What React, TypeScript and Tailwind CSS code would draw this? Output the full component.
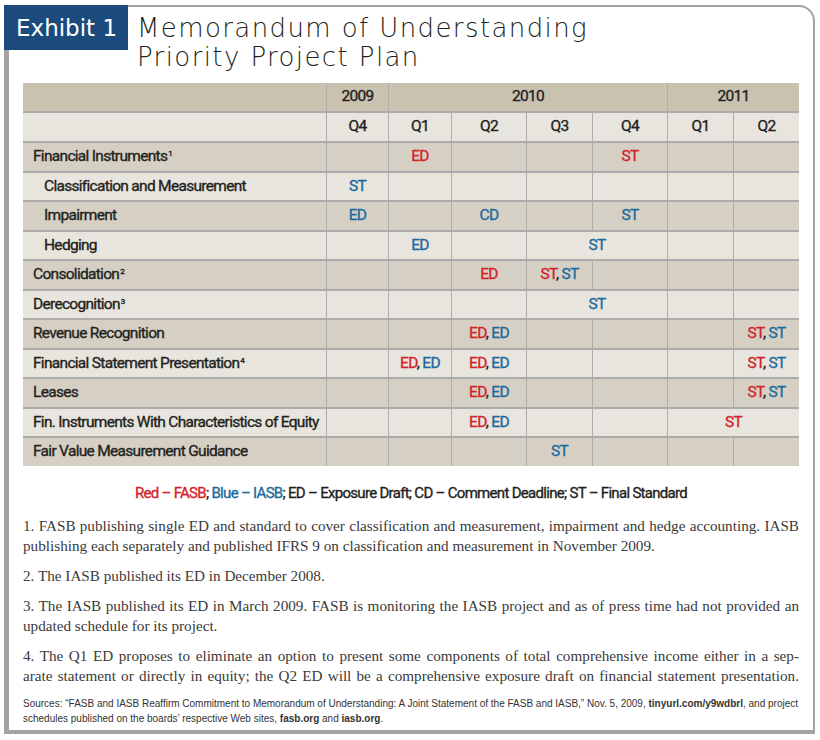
import React from 'react';

type Tone = 'r' | 'b';
type Mark = [string, Tone];

interface Cell {
  span?: number;
  marks?: Mark[];
}

interface Row {
  label: string;
  sup?: string;
  indent?: boolean;
  cells: Cell[];
}

const e: Cell = {};
const red = (t: string): Cell => ({ marks: [[t, 'r']] });
const blue = (t: string): Cell => ({ marks: [[t, 'b']] });
const both = (t: string): Cell => ({ marks: [[t, 'r'], [t, 'b']] });

const rows: Row[] = [
  { label: 'Financial Instruments', sup: '1', cells: [e, red('ED'), e, e, red('ST'), e, e] },
  { label: 'Classification and Measurement', indent: true, cells: [blue('ST'), e, e, e, e, e, e] },
  { label: 'Impairment', indent: true, cells: [blue('ED'), e, blue('CD'), e, blue('ST'), e, e] },
  { label: 'Hedging', indent: true, cells: [e, blue('ED'), e, { ...blue('ST'), span: 2 }, e, e] },
  { label: 'Consolidation', sup: '2', cells: [e, e, red('ED'), both('ST'), e, e, e] },
  { label: 'Derecognition', sup: '3', cells: [e, e, e, { ...blue('ST'), span: 2 }, e, e] },
  { label: 'Revenue Recognition', cells: [e, e, both('ED'), e, e, e, both('ST')] },
  { label: 'Financial Statement Presentation', sup: '4', cells: [e, both('ED'), both('ED'), e, e, e, both('ST')] },
  { label: 'Leases', cells: [e, e, both('ED'), e, e, e, both('ST')] },
  { label: 'Fin. Instruments With Characteristics of Equity', cells: [e, e, both('ED'), e, e, { ...red('ST'), span: 2 }] },
  { label: 'Fair Value Measurement Guidance', cells: [e, e, e, blue('ST'), e, e, e] },
];

const quarters = ['Q4', 'Q1', 'Q2', 'Q3', 'Q4', 'Q1', 'Q2'];

const Marks = ({ marks }: { marks?: Mark[] }) => {
  if (!marks) return null;
  return (
    <span className="whitespace-pre">
      {marks.map(([t, tone], i) => (
        <React.Fragment key={i}>
          {i > 0 && <span className="text-[#231f20]">, </span>}
          <span className={tone === 'r' ? 'text-[#d2232a]' : 'text-[#1b6a9c]'}>{t}</span>
        </React.Fragment>
      ))}
    </span>
  );
};

const App: React.FC = () => {
  return (
    <div className="w-[820px] h-[740px] bg-white pt-[5px] pl-[4px]">
      <div className="w-[811px] h-[729px] border-t-2 border-r-2 border-b-4 border-l-[5px] border-[#a3a3a3] rounded-tr-[16px] flex flex-col">
        {/* heading */}
        <div className="flex items-start">
          <div className="-mt-[2px] -ml-[5px] w-[124px] h-[45px] bg-[#1b4b7c] text-white pl-[12px] pt-[2px] text-[23px] leading-[43px] font-['DejaVu_Sans',sans-serif]">
            Exhibit 1
          </div>
          <h1 className="ml-[9px] mt-[7px] text-[26px] leading-[29px] tracking-[1.4px] font-extralight text-[#231f20] font-['DejaVu_Sans',sans-serif]">
            Memorandum of Understanding
            <br />
            Priority Project Plan
          </h1>
        </div>

        {/* schedule table */}
        <div className="mt-[11px] ml-[14px] w-[776px] grid grid-cols-[303px_61px_62px_74px_65px_74px_65px_65px] grid-rows-[28px_28px] auto-rows-[27.5px] gap-x-px gap-y-[2px] bg-[#acacac] text-[15.5px] tracking-[-0.7px] [-webkit-text-stroke:0.35px_currentColor] font-['Roboto',sans-serif] text-[#231f20]">
          <div className="bg-[#cac2b1]" />
          <div className="bg-[#cac2b1] flex items-center justify-center">2009</div>
          <div className="bg-[#cac2b1] col-span-4 flex items-center justify-center">2010</div>
          <div className="bg-[#cac2b1] col-span-2 flex items-center justify-center">2011</div>

          <div className="bg-[#e8e5de]" />
          {quarters.map((q, i) => (
            <div key={i} className="bg-[#e8e5de] flex items-center justify-center">
              {q}
            </div>
          ))}

          {rows.map((row, ri) => {
            const bg = ri % 2 === 0 ? 'bg-[#d6d0c4]' : 'bg-[#e8e5de]';
            return (
              <React.Fragment key={ri}>
                <div className={`${bg} flex items-center whitespace-nowrap ${row.indent ? 'pl-[21px]' : 'pl-[10px]'}`}>
                  <span>
                    {row.label}
                    {row.sup && <sup className="text-[8px] ml-[1px] relative -top-[5px]">{row.sup}</sup>}
                  </span>
                </div>
                {row.cells.map((c, ci) => (
                  <div
                    key={ci}
                    className={`${bg} flex items-center justify-center ${c.span === 2 ? 'col-span-2' : ''}`}
                  >
                    <Marks marks={c.marks} />
                  </div>
                ))}
              </React.Fragment>
            );
          })}
        </div>

        {/* legend */}
        <p className="mt-[17px] text-center text-[15px] leading-[20px] tracking-[-0.7px] [-webkit-text-stroke:0.35px_currentColor] text-[#231f20] font-['Roboto',sans-serif]">
          <span className="text-[#d2232a]">Red – FASB</span>; <span className="text-[#1b6a9c]">Blue – IASB</span>; ED – Exposure Draft; CD – Comment Deadline; ST – Final Standard
        </p>

        {/* notes */}
        <div className="mt-[13px] ml-[14px] w-[776px] text-[15.2px] leading-[20px] text-[#3a3a3a] font-['Liberation_Serif',serif] flex flex-col gap-[10px]">
          <div>
            <p className="text-justify [text-align-last:justify] whitespace-nowrap">
              1. FASB publishing single ED and standard to cover classification and measurement, impairment and hedge accounting. IASB
            </p>
            <p>publishing each separately and published IFRS 9 on classification and measurement in November 2009.</p>
          </div>
          <p>2. The IASB published its ED in December 2008.</p>
          <div>
            <p className="text-justify [text-align-last:justify] whitespace-nowrap">
              3. The IASB published its ED in March 2009. FASB is monitoring the IASB project and as of press time had not provided an
            </p>
            <p>updated schedule for its project.</p>
          </div>
          <div>
            <p className="text-justify [text-align-last:justify] whitespace-nowrap">
              4. The Q1 ED proposes to eliminate an option to present some components of total comprehensive income either in a sep-
            </p>
            <p className="text-justify [text-align-last:justify] whitespace-nowrap">
              arate statement or directly in equity; the Q2 ED will be a comprehensive exposure draft on financial statement presentation.
            </p>
          </div>
        </div>

        {/* sources */}
        <div className="mt-[10px] ml-[14px] w-[776px] text-[10px] leading-[15px] text-[#333] whitespace-nowrap font-['Liberation_Sans',sans-serif]">
          <p>
            Sources: “FASB and IASB Reaffirm Commitment to Memorandum of Understanding: A Joint Statement of the FASB and IASB,” Nov. 5, 2009,{' '}
            <span className="font-bold">tinyurl.com/y9wdbrl</span>, and project
          </p>
          <p>
            schedules published on the boards’ respective Web sites, <span className="font-bold">fasb.org</span> and{' '}
            <span className="font-bold">iasb.org</span>.
          </p>
        </div>
      </div>
    </div>
  );
};

export default App;
